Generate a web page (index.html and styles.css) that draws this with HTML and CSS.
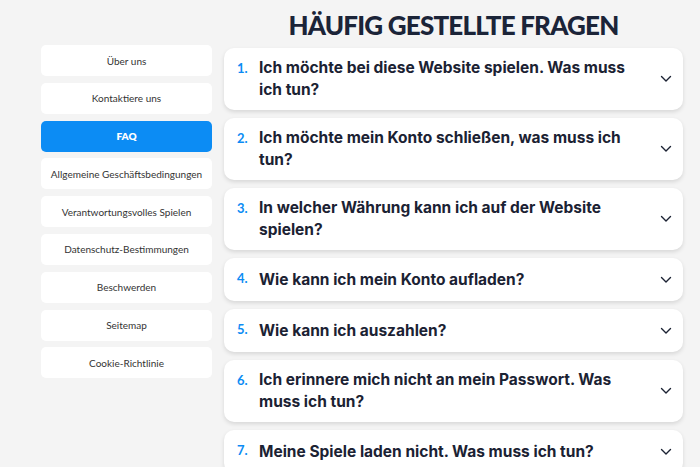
FILE: index.html
```html
<!DOCTYPE html>
<html lang="de">
<head>
    <meta charset="UTF-8">
    <meta name="viewport" content="width=device-width, initial-scale=1.0">
    <title>Häufig gestellte Fragen</title>
    <link rel="stylesheet" href="styles.css">
</head>
<body>
    <!-- Page wrapper: sidebar menu + FAQ column -->
    <div class="page">
        <nav class="side-menu">
            <a class="menu-item" href="#">Über uns</a>
            <a class="menu-item" href="#">Kontaktiere uns</a>
            <a class="menu-item active" href="#">FAQ</a>
            <a class="menu-item" href="#">Allgemeine Geschäftsbedingungen</a>
            <a class="menu-item" href="#">Verantwortungsvolles Spielen</a>
            <a class="menu-item" href="#">Datenschutz-Bestimmungen</a>
            <a class="menu-item" href="#">Beschwerden</a>
            <a class="menu-item" href="#">Seitemap</a>
            <a class="menu-item" href="#">Cookie-Richtlinie</a>
        </nav>

        <main class="faq">
            <h1>Häufig gestellte Fragen</h1>

            <div class="faq-item">
                <span class="faq-num">1.</span>
                <span class="faq-question">Ich möchte bei diese Website spielen. Was muss ich tun?</span>
                <svg class="chevron" viewBox="0 0 12 8"><path d="M1.5 1.5 6 6l4.5-4.5"/></svg>
            </div>
            <div class="faq-item">
                <span class="faq-num">2.</span>
                <span class="faq-question">Ich möchte mein Konto schließen, was muss ich tun?</span>
                <svg class="chevron" viewBox="0 0 12 8"><path d="M1.5 1.5 6 6l4.5-4.5"/></svg>
            </div>
            <div class="faq-item">
                <span class="faq-num">3.</span>
                <span class="faq-question">In welcher Währung kann ich auf der Website spielen?</span>
                <svg class="chevron" viewBox="0 0 12 8"><path d="M1.5 1.5 6 6l4.5-4.5"/></svg>
            </div>
            <div class="faq-item">
                <span class="faq-num">4.</span>
                <span class="faq-question">Wie kann ich mein Konto aufladen?</span>
                <svg class="chevron" viewBox="0 0 12 8"><path d="M1.5 1.5 6 6l4.5-4.5"/></svg>
            </div>
            <div class="faq-item">
                <span class="faq-num">5.</span>
                <span class="faq-question">Wie kann ich auszahlen?</span>
                <svg class="chevron" viewBox="0 0 12 8"><path d="M1.5 1.5 6 6l4.5-4.5"/></svg>
            </div>
            <div class="faq-item">
                <span class="faq-num">6.</span>
                <span class="faq-question">Ich erinnere mich nicht an mein Passwort. Was muss ich tun?</span>
                <svg class="chevron" viewBox="0 0 12 8"><path d="M1.5 1.5 6 6l4.5-4.5"/></svg>
            </div>
            <div class="faq-item">
                <span class="faq-num">7.</span>
                <span class="faq-question">Meine Spiele laden nicht. Was muss ich tun?</span>
                <svg class="chevron" viewBox="0 0 12 8"><path d="M1.5 1.5 6 6l4.5-4.5"/></svg>
            </div>
        </main>
    </div>
</body>
</html>
```

FILE: styles.css
```css
/* Base page */
body {
    margin: 0;
    background-color: #f4f4f4;
    font-family: 'Lato', 'Noto Sans', sans-serif;
    color: #1b2233;
}

/* Two column layout */
.page {
    display: grid;
    grid-template-columns: 171px 459px;
    column-gap: 12px;
    padding-left: 41px;
    align-items: start;
}

/* Left side menu */
.side-menu {
    display: flex;
    flex-direction: column;
    gap: 6.8px;
    margin-top: 45px;
}

.menu-item {
    display: flex;
    align-items: center;
    justify-content: center;
    height: 31px;
    background-color: #fff;
    border-radius: 5px;
    font-size: 10px;
    color: #333;
    text-decoration: none;
}

.menu-item.active {
    background-color: #0c8cf4;
    color: #fff;
    font-weight: 800;
}

/* FAQ column */
.faq h1 {
    margin: 11px 0 9px;
    text-align: center;
    font-size: 26px;
    line-height: 28px;
    font-weight: 900;
    letter-spacing: -0.8px;
    text-transform: uppercase;
    color: #1b2438;
}

.faq-item {
    display: flex;
    align-items: center;
    box-sizing: border-box;
    min-height: 43px;
    margin-bottom: 8px;
    padding: 9px 11px 9px 13px;
    background-color: #fff;
    border-radius: 10px;
    box-shadow: 0 2px 4px rgba(0, 0, 0, 0.12);
}

.faq-num {
    align-self: flex-start;
    width: 22px;
    flex-shrink: 0;
    font-size: 13px;
    line-height: 22px;
    font-weight: 700;
    color: #0c8cf4;
}

.faq-question {
    flex: 1;
    padding-right: 20px;
    font-family: 'Inter', 'Lato', sans-serif;
    font-size: 15.5px;
    line-height: 22px;
    font-weight: 700;
}

.chevron {
    width: 12px;
    height: 8px;
    fill: none;
    stroke: #1b2233;
    stroke-width: 1.4;
    stroke-linecap: round;
    stroke-linejoin: round;
}
```
